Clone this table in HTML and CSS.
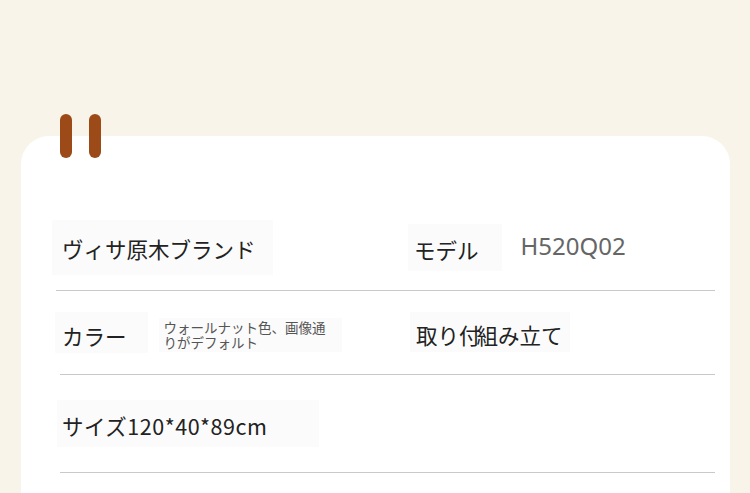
FILE: index.html
```html
<!DOCTYPE html>
<html lang="ja">
<head>
<meta charset="utf-8">
<title>Spec</title>
<link rel="stylesheet" href="styles.css">
</head>
<body>
<div class="page">
  <div class="clips">
    <span class="clip"></span>
    <span class="clip"></span>
  </div>
  <div class="card">
    <div class="row row--first">
      <div class="cell cell--left1">
        <span class="label label--tall">ヴィサ原木ブランド</span>
      </div>
      <div class="cell">
        <span class="label label--model">モデル</span>
        <span class="value">H520Q02</span>
      </div>
    </div>
    <div class="row row--second">
      <div class="cell cell--left">
        <span class="label label--color">カラー</span>
        <span class="note"><span class="note-line">ウォールナット色、画像通</span><span class="note-line">りがデフォルト</span></span>
      </div>
      <div class="cell">
        <span class="label label--assembly">取り付<span class="overlap">組み立て</span></span>
      </div>
    </div>
    <div class="row row--third">
      <div class="cell cell--left">
        <span class="label label--size">サイズ120*40*89cm</span>
      </div>
      <div class="cell"></div>
    </div>
  </div>
</div>
</body>
</html>
```

FILE: styles.css
```css
* {
  box-sizing: border-box;
}

html, body {
  margin: 0;
  padding: 0;
}

body {
  width: 750px;
  height: 493px;
  overflow: hidden;
  background: #f8f4e9;
  font-family: "Noto Sans CJK JP", "Noto Sans", sans-serif;
  color: #222;
}

.page {
  position: relative;
  padding-top: 136px;
}

.clips {
  position: absolute;
  top: 114px;
  left: 60px;
  display: flex;
  gap: 17px;
  z-index: 2;
}

.clip {
  display: block;
  width: 12px;
  height: 44px;
  border-radius: 6px;
  background: #9d4a19;
}

.card {
  margin-left: 21px;
  width: 709px;
  height: 357px;
  overflow: hidden;
  background: #ffffff;
  border-radius: 28px 28px 0 0;
  padding: 0 15px 0 35px;
}

.row {
  display: flex;
  border-bottom: 1px solid #c9c9c9;
}

.row--first {
  padding: 84px 0 15px;
  height: 155px;
  align-items: center;
}

.row--second {
  margin-left: 4px;
  padding: 21px 0 21px;
  height: 84px;
  align-items: flex-start;
}

.row--third {
  margin-left: 4px;
  padding: 25px 0 25px;
  height: 98px;
  align-items: flex-start;
}

.cell {
  display: flex;
  align-items: center;
}

.cell--left1 {
  width: 356px;
  margin-left: -4px;
}

.cell--left {
  width: 353px;
  margin-left: -5px;
  align-items: flex-start;
}

.label {
  display: inline-block;
  background: #fbfbfb;
  font-size: 21.5px;
  font-weight: 400;
  color: #222;
  white-space: nowrap;
}

.label--tall {
  height: 55px;
  line-height: 57px;
  padding: 0 17px 0 10px;
}

.label--model {
  height: 47px;
  line-height: 52px;
  padding: 0 23px 0 6px;
}

.label--color {
  height: 41px;
  line-height: 47px;
  padding: 0 21px 0 7px;
}

.label--assembly {
  height: 40px;
  line-height: 45px;
  padding: 0 7px 0 6px;
  margin-left: 2px;
}

.overlap {
  margin-left: -4px;
}

.label--size {
  height: 47px;
  line-height: 52px;
  padding: 0 52px 0 5px;
  margin-left: 2px;
}

.label--size {
  letter-spacing: 0.5px;
}

.value {
  margin-left: 19px;
  font-family: "Noto Sans", sans-serif;
  font-size: 24px;
  color: #666;
  line-height: 1;
  margin-top: -3px;
}

.note {
  display: flex;
  flex-direction: column;
  margin-left: 11px;
  margin-top: 6px;
  background: #fbfbfb;
  padding: 2px 16px 2px 5px;
  font-size: 13.5px;
  color: #555;
  white-space: nowrap;
}

.note-line {
  display: block;
  height: 15px;
  line-height: 15px;
}
```
